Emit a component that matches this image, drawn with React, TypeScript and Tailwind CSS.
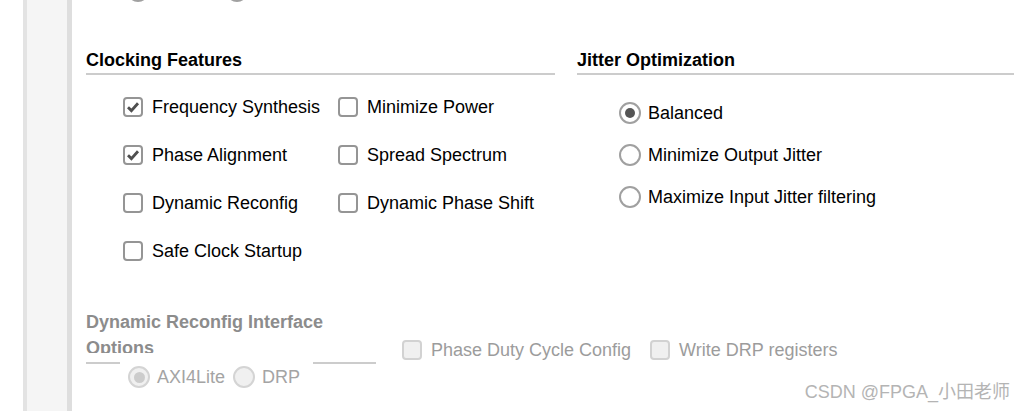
import type { ReactNode } from "react";

function Checkbox({ checked = false, disabled = false }: { checked?: boolean; disabled?: boolean }) {
  return (
    <span
      className={
        disabled
          ? "flex h-[20px] w-[20px] shrink-0 items-center justify-center rounded-[4px] border-2 border-[#d2d2d2] bg-[#f0f0f0]"
          : "flex h-[20px] w-[20px] shrink-0 items-center justify-center rounded-[4px] border-2 border-[#959595] bg-white"
      }
    >
      {checked ? (
        <svg width="14" height="14" viewBox="0 0 14 14">
          <polyline points="2,7.2 5.4,10.6 12,3.2" fill="none" stroke="#4f4f4f" strokeWidth="2.8" />
        </svg>
      ) : null}
    </span>
  );
}

function Radio({ checked = false, disabled = false }: { checked?: boolean; disabled?: boolean }) {
  return (
    <span
      className={
        disabled
          ? "flex h-[22px] w-[22px] shrink-0 items-center justify-center rounded-full border-2 border-[#d4d4d4] bg-[#f0f0f0]"
          : "flex h-[22px] w-[22px] shrink-0 items-center justify-center rounded-full border-2 border-[#a0a0a0] bg-white"
      }
    >
      {checked ? (
        <span className={disabled ? "h-[11px] w-[11px] rounded-full bg-[#cccccc]" : "h-[10px] w-[10px] rounded-full bg-[#555555]"} />
      ) : null}
    </span>
  );
}

function CheckItem({ label, checked, disabled }: { label: string; checked?: boolean; disabled?: boolean }) {
  return (
    <div className="flex h-[20px] items-center gap-[9px]">
      <Checkbox checked={checked} disabled={disabled} />
      <span className={disabled ? "whitespace-nowrap text-[#9c9c9c]" : "whitespace-nowrap text-black"}>{label}</span>
    </div>
  );
}

function RadioItem({ label, checked, disabled }: { label: string; checked?: boolean; disabled?: boolean }) {
  return (
    <div className="flex h-[22px] items-center gap-[7px]">
      <Radio checked={checked} disabled={disabled} />
      <span className={disabled ? "whitespace-nowrap text-[#a4a4a4]" : "whitespace-nowrap text-black"}>{label}</span>
    </div>
  );
}

function Section({ title, className, children }: { title: string; className?: string; children: ReactNode }) {
  return (
    <div className={className}>
      <div className="border-b-2 border-[#cccccc] pb-[2px] text-[18px] leading-[22px] font-bold text-black">{title}</div>
      {children}
    </div>
  );
}

export default function App() {
  return (
    <div className="relative flex h-[411px] w-full overflow-hidden bg-white font-['Liberation_Sans',Arial,sans-serif] text-[18px]">
      <div className="w-[23px] shrink-0 bg-white" />
      <div className="w-[49px] shrink-0 border-l-4 border-r-[5px] border-l-[#e3e3e3] border-r-[#dedede] bg-[#f5f5f5]" />

      <div className="flex-1 pl-[14px]">
        {/* bottoms of the radios scrolled out above */}
        <div className="flex h-[2px]">
          <span className="-mt-[20px] ml-[41px] h-[22px] w-[22px] rounded-full border-2 border-[#a0a0a0]" />
          <span className="-mt-[20px] ml-[77px] h-[22px] w-[22px] rounded-full border-2 border-[#a0a0a0]" />
        </div>

        <div className="mt-[47px] flex gap-[22px]">
          <Section title="Clocking Features" className="w-[469px] shrink-0">
            <div className="grid grid-cols-[215px_auto] gap-y-[28px] pt-[22px] pl-[37px]">
              <CheckItem label="Frequency Synthesis" checked />
              <CheckItem label="Minimize Power" />
              <CheckItem label="Phase Alignment" checked />
              <CheckItem label="Spread Spectrum" />
              <CheckItem label="Dynamic Reconfig" />
              <CheckItem label="Dynamic Phase Shift" />
              <CheckItem label="Safe Clock Startup" />
            </div>
          </Section>

          <Section title="Jitter Optimization" className="flex-1">
            <div className="flex flex-col gap-[20px] pt-[27px] pl-[42px]">
              <RadioItem label="Balanced" checked />
              <RadioItem label="Minimize Output Jitter" />
              <RadioItem label="Maximize Input Jitter filtering" />
            </div>
          </Section>
        </div>

        <div className="mt-[48px] flex items-start">
          <div className="w-[290px] shrink-0">
            <div className="h-[44px] overflow-hidden text-[18px] leading-[26px] font-bold text-[#8c8c8c]">
              Dynamic Reconfig Interface Options
            </div>
            <div className="mt-[9px] border-t-2 border-[#cccccc]">
              <div className="-mt-[4px] ml-[34px] flex h-[34px] w-[193px] items-center gap-[8px] bg-white pl-[8px]">
                <RadioItem label="AXI4Lite" checked disabled />
                <RadioItem label="DRP" disabled />
              </div>
            </div>
          </div>
          <div className="mt-[31px] ml-[26px] flex gap-[19px]">
            <CheckItem label="Phase Duty Cycle Config" disabled />
            <CheckItem label="Write DRP registers" disabled />
          </div>
        </div>
      </div>

      <div className="absolute right-[4px] bottom-[8px] font-['Liberation_Sans','Noto_Sans_CJK_SC',sans-serif] text-[18px] leading-[22px] text-[#b4b4b4]">
        CSDN @FPGA_小田老师
      </div>
    </div>
  );
}
